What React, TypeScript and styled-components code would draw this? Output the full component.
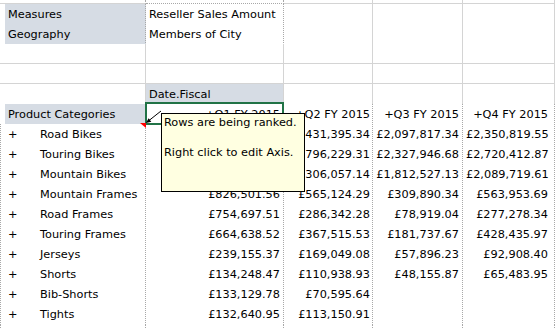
import React from 'react';
import styled, { createGlobalStyle } from 'styled-components';

const GlobalStyle = createGlobalStyle`
  html, body { margin: 0; padding: 0; background: #fff; }
  body {
    font-family: "DejaVu Sans", Tahoma, Verdana, sans-serif;
    font-size: 11.3px;
    color: #000;
  }
`;

type Line = 'solid' | 'dotted' | 'none';

const lineCss = (l: Line) =>
  l === 'solid' ? '1px solid #d4d4d4' : l === 'dotted' ? '1px dotted #a8a8a8' : '1px solid transparent';

const Sheet = styled.div`
  position: relative;
  width: 555px;
  height: 329px;
  overflow: hidden;
`;

const Row = styled.div<{ $h?: number }>`
  display: grid;
  grid-template-columns: 5px 141px 138px 89px 90px 92px;
  height: ${(p) => p.$h ?? 20}px;
`;

const Cell = styled.div<{
  $r?: Line;
  $b?: Line;
  $l?: Line;
  $fill?: boolean;
  $right?: boolean;
  $pad?: number;
  $selected?: boolean;
}>`
  position: relative;
  box-sizing: border-box;
  height: 100%;
  border-right: ${(p) => lineCss(p.$r ?? 'solid')};
  border-bottom: ${(p) => lineCss(p.$b ?? 'solid')};
  border-left: ${(p) => (p.$l ? lineCss(p.$l) : '0')};
  background: ${(p) => (p.$fill ? '#d6dce4' : '#fff')};
  padding: 1px ${(p) => p.$pad ?? 3}px 0 3px;
  line-height: 19px;
  white-space: nowrap;
  text-align: ${(p) => (p.$right ? 'right' : 'left')};

  ${(p) =>
    p.$selected &&
    `
    &::after {
      content: '';
      position: absolute;
      left: -1px;
      top: -2px;
      right: -1px;
      bottom: -1px;
      border: 2px solid #217346;
      z-index: 1;
    }
  `}
`;

const Plus = styled.span`
  display: inline-block;
  width: 32px;
`;

const Comment = styled.div`
  position: absolute;
  left: 161px;
  top: 113px;
  width: 144px;
  height: 79px;
  box-sizing: border-box;
  border: 1px solid #000;
  background: #ffffe1;
  padding: 1px 2px;
  line-height: 15px;
  z-index: 3;
`;

const Pointer = styled.svg`
  position: absolute;
  left: 138px;
  top: 106px;
  z-index: 4;
`;

const Blank = ({ r, b, l }: { r?: Line; b?: Line; l?: Line }) => <Cell $r={r} $b={b} $l={l} />;

// right padding of the quarter columns B..E
const pads = [3, 2, 3, 6];

interface Item {
  name: string;
  q: string[];
}

const items: Item[] = [
  { name: 'Road Bikes', q: ['£3,130,826.44', '£2,431,395.34', '£2,097,817.34', '£2,350,819.55'] },
  { name: 'Touring Bikes', q: ['£1,209,334.50', '£1,796,229.31', '£2,327,946.68', '£2,720,412.87'] },
  { name: 'Mountain Bikes', q: ['£2,654,102.80', '£1,306,057.14', '£1,812,527.13', '£2,089,719.61'] },
  { name: 'Mountain Frames', q: ['£826,501.56', '£565,124.29', '£309,890.34', '£563,953.69'] },
  { name: 'Road Frames', q: ['£754,697.51', '£286,342.28', '£78,919.04', '£277,278.34'] },
  { name: 'Touring Frames', q: ['£664,638.52', '£367,515.53', '£181,737.67', '£428,435.97'] },
  { name: 'Jerseys', q: ['£239,155.37', '£169,049.08', '£57,896.23', '£92,908.40'] },
  { name: 'Shorts', q: ['£134,248.47', '£110,938.93', '£48,155.87', '£65,483.95'] },
  { name: 'Bib-Shorts', q: ['£133,129.78', '£70,595.64', '', ''] },
  { name: 'Tights', q: ['£132,640.95', '£113,150.91', '', ''] },
];

const quarters = ['+Q1 FY 2015', '+Q2 FY 2015', '+Q3 FY 2015', '+Q4 FY 2015'];

export default function App() {
  return (
    <>
      <GlobalStyle />
      <Sheet>
        <Row $h={4}>
          <Blank r="none" />
          <Blank r="dotted" />
          <Blank r="dotted" b="dotted" />
          <Blank />
          <Blank />
          <Blank />
        </Row>
        <Row>
          <Blank r="none" />
          <Cell $fill $r="dotted" $b="none">Measures</Cell>
          <Cell $r="dotted" $b="dotted">Reseller Sales Amount</Cell>
          <Blank />
          <Blank />
          <Blank />
        </Row>
        <Row>
          <Blank r="none" />
          <Cell $fill $r="dotted">Geography</Cell>
          <Cell $r="dotted" $b="dotted">Members of City</Cell>
          <Blank />
          <Blank />
          <Blank />
        </Row>
        <Row>
          <Blank r="none" />
          <Blank />
          <Blank />
          <Blank />
          <Blank />
          <Blank />
        </Row>
        <Row>
          <Blank r="none" />
          <Blank />
          <Blank />
          <Blank />
          <Blank />
          <Blank />
        </Row>
        <Row>
          <Blank r="none" />
          <Blank />
          <Cell $fill>Date.Fiscal</Cell>
          <Blank b="dotted" />
          <Blank b="dotted" />
          <Blank b="dotted" />
        </Row>
        <Row>
          <Blank r="none" b="dotted" />
          <Cell $fill $r="dotted" $b="dotted">Product Categories</Cell>
          {quarters.map((q, i) => (
            <Cell key={q} $right $pad={pads[i]} $selected={i === 0} $r="dotted" $b="dotted">
              {q}
            </Cell>
          ))}
        </Row>
        {items.map((it) => (
          <Row key={it.name}>
            <Blank r="none" b="dotted" l="dotted" />
            <Cell $r="dotted" $b="dotted">
              <Plus>+</Plus>
              {it.name}
            </Cell>
            {it.q.map((v, i) => (
              <Cell key={i} $right $pad={pads[i]} $r="dotted" $b="dotted">
                {v}
              </Cell>
            ))}
          </Row>
        ))}
        <Row $h={6}>
          <Blank r="none" b="none" l="dotted" />
          <Blank r="dotted" b="none" />
          <Blank r="dotted" b="none" />
          <Blank r="dotted" b="none" />
          <Blank r="dotted" b="none" />
          <Blank r="dotted" b="none" />
        </Row>

        <Comment>
          Rows are being ranked.
          <br />
          <br />
          Right click to edit Axis.
        </Comment>
        <Pointer width="28" height="24" viewBox="0 0 28 24">
          <polygon points="2,17 8,17 8,22" fill="#ff0000" />
          <line x1="23" y1="5" x2="11" y2="14.5" stroke="#000" strokeWidth="1" />
          <polygon points="8,17 13.3,15.7 10.6,12.2" fill="#000" />
        </Pointer>
      </Sheet>
    </>
  );
}
